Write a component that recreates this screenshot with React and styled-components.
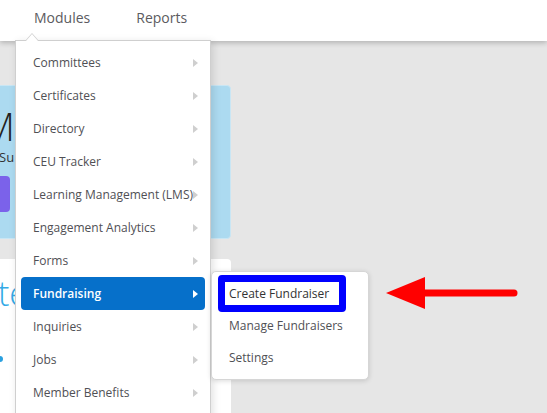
import React from "react";
import styled, { createGlobalStyle } from "styled-components";

const Global = createGlobalStyle`
  html, body { margin: 0; padding: 0; }
  body { font-family: "Open Sans", "Noto Sans", sans-serif; background: #e6e6e6; overflow: hidden; }
  * { box-sizing: border-box; }
`;

const Page = styled.div`
  position: relative;
  width: 547px;
  height: 413px;
  overflow: hidden;
  background: #e6e6e6;
`;

const Header = styled.header`
  position: relative;
  z-index: 2;
  height: 41px;
  background: #fff;
  display: flex;
  align-items: center;
  gap: 46px;
  padding-left: 34px;
  box-shadow: 0 2px 5px rgba(0, 0, 0, 0.22);
`;

const NavLink = styled.span`
  font-size: 14px;
  color: #5b5b60;
  padding-bottom: 7px;
`;

const Content = styled.main`
  display: flex;
  flex-direction: column;
  gap: 20px;
  padding-top: 44px;
  width: 231px;
`;

const HeroCard = styled.section`
  height: 154px;
  margin-left: -20px;
  background: #acdaf0;
  border: 1px solid #c9e6f4;
  border-radius: 4px;
  padding: 20px 0 0 6px;
`;

const HeroTitle = styled.div`
  font-size: 38px;
  line-height: 40px;
  color: #222;
  font-weight: 300;
  margin-left: -5px;
`;

const HeroSub = styled.div`
  font-size: 13px;
  color: #333;
  margin: 2px 0 0 12px;
`;

const HeroButton = styled.div`
  width: 23px;
  height: 36px;
  margin-top: 10px;
  border-radius: 4px;
  background: #7b62ea;
`;

const WhiteCard = styled.section`
  height: 200px;
  margin-left: -20px;
  background: #fff;
  border-radius: 4px;
  padding: 14px 0 0 0;
`;

const CardTitle = styled.div`
  font-size: 34px;
  line-height: 40px;
  color: #33a9e6;
  margin-left: 18px;
  font-weight: 300;
`;

const Dot = styled.div`
  width: 6px;
  height: 6px;
  border-radius: 50%;
  background: #2aa0df;
  margin: 43px 0 0 17px;
`;

const Dropdown = styled.nav`
  position: absolute;
  z-index: 3;
  left: 15px;
  top: 40px;
  width: 196px;
  height: 400px;
  background: #fff;
  border: 1px solid #cfcfcf;
  box-shadow: 2px 2px 8px rgba(0, 0, 0, 0.12);
  padding: 5px 5px;
  display: flex;
  flex-direction: column;
  &::before, &::after {
    content: "";
    position: absolute;
    left: 9px;
    border-style: solid;
    border-color: transparent;
  }
  &::before {
    top: -8px;
    border-width: 0 7px 8px 7px;
    border-bottom-color: #cfcfcf;
  }
  &::after {
    top: -7px;
    left: 10px;
    border-width: 0 6px 7px 6px;
    border-bottom-color: #fff;
  }
`;

const Item = styled.div`
  position: relative;
  height: 33px;
  flex: none;
  display: flex;
  align-items: center;
  justify-content: space-between;
  padding: 0 7px 0 12px;
  border-radius: 4px;
  font-size: 12px;
  color: ${(p) => (p.$active ? "#fff" : "#505055")};
  font-weight: ${(p) => (p.$active ? 600 : 400)};
  background: ${(p) => (p.$active ? "#0670ca" : "transparent")};
  white-space: nowrap;
`;

const Caret = styled.span`
  width: 0;
  height: 0;
  border-style: solid;
  border-width: 4.5px 0 4.5px 5px;
  border-color: transparent transparent transparent ${(p) => (p.$active ? "#fff" : "#cfcfcf")};
  flex: none;
`;

const Submenu = styled.div`
  position: absolute;
  z-index: 4;
  left: 211px;
  top: 271px;
  width: 158px;
  height: 109px;
  background: #fff;
  border: 1px solid #d6d6d6;
  border-radius: 5px;
  box-shadow: 0 1px 5px rgba(0, 0, 0, 0.15);
  padding: 5px 0;
  display: flex;
  flex-direction: column;
`;

const SubItem = styled.div`
  height: 33px;
  display: flex;
  align-items: center;
  padding-left: 17px;
  font-size: 12px;
  color: #505055;
  white-space: nowrap;
`;

const Highlight = styled.div`
  position: absolute;
  z-index: 5;
  left: 218px;
  top: 275px;
  width: 128px;
  height: 37px;
  border: 7px solid #0000ff;
  border-radius: 4px;
  padding-left: 4px;
  display: flex;
  align-items: center;
  background: #fff;
  font-size: 12px;
  color: #333;
  white-space: nowrap;
`;

const Arrow = styled.svg`
  position: absolute;
  z-index: 5;
  left: 380px;
  top: 270px;
`;

const items = [
  "Committees",
  "Certificates",
  "Directory",
  "CEU Tracker",
  "Learning Management (LMS)",
  "Engagement Analytics",
  "Forms",
  "Fundraising",
  "Inquiries",
  "Jobs",
  "Member Benefits",
];

export default function App() {
  return (
    <>
      <Global />
      <Page>
        <Header>
          <NavLink>Modules</NavLink>
          <NavLink>Reports</NavLink>
        </Header>
        <Content>
          <HeroCard>
            <HeroTitle>M</HeroTitle>
            <HeroSub>Su</HeroSub>
            <HeroButton />
          </HeroCard>
          <WhiteCard>
            <CardTitle>te</CardTitle>
            <Dot />
          </WhiteCard>
        </Content>
        <Dropdown>
          {items.map((label) => {
            const active = label === "Fundraising";
            return (
              <Item key={label} $active={active}>
                <span>{label}</span>
                <Caret $active={active} />
              </Item>
            );
          })}
        </Dropdown>
        <Submenu>
          <SubItem>Create Fundraiser</SubItem>
          <SubItem>Manage Fundraisers</SubItem>
          <SubItem>Settings</SubItem>
        </Submenu>
        <Highlight>Create Fundraiser</Highlight>
        <Arrow width="145" height="46" viewBox="0 0 145 46">
          <line x1="40" y1="23" x2="134" y2="23" stroke="#ff0000" strokeWidth="7" strokeLinecap="round" />
          <polygon points="6,23 45,7 45,39" fill="#ff0000" />
        </Arrow>
      </Page>
    </>
  );
}
